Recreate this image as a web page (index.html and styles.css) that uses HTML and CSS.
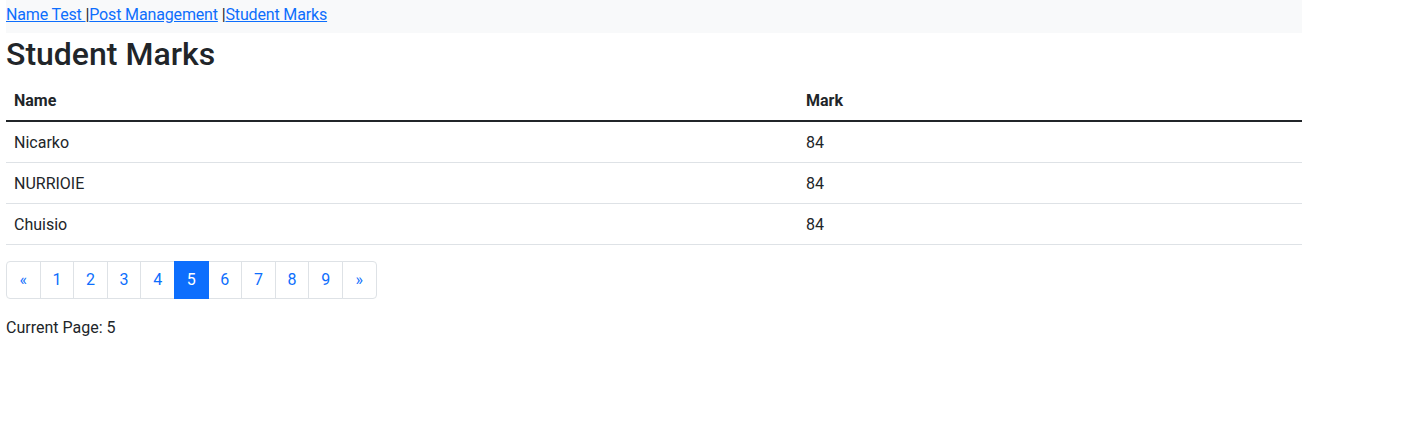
FILE: index.html
```html
<!DOCTYPE html>
<html lang="en">
<head>
<meta charset="utf-8">
<title>Student Marks</title>
<link rel="stylesheet" href="styles.css">
</head>
<body>
<div class="page">
  <nav class="topnav"><a href="#">Name Test </a>|<a href="#">Post Management</a> |<a href="#">Student Marks</a></nav>
  <h2 class="title">Student Marks</h2>
  <table class="marks">
    <thead>
      <tr><th class="col-name">Name</th><th>Mark</th></tr>
    </thead>
    <tbody>
      <tr><td>Nicarko</td><td>84</td></tr>
      <tr><td>NURRIOIE</td><td>84</td></tr>
      <tr><td>Chuisio</td><td>84</td></tr>
    </tbody>
  </table>
  <ul class="pagination">
    <li><a class="page-link" href="#">&laquo;</a></li>
    <li><a class="page-link" href="#">1</a></li>
    <li><a class="page-link" href="#">2</a></li>
    <li><a class="page-link" href="#">3</a></li>
    <li><a class="page-link" href="#">4</a></li>
    <li><a class="page-link active" href="#">5</a></li>
    <li><a class="page-link" href="#">6</a></li>
    <li><a class="page-link" href="#">7</a></li>
    <li><a class="page-link" href="#">8</a></li>
    <li><a class="page-link" href="#">9</a></li>
    <li><a class="page-link" href="#">&raquo;</a></li>
  </ul>
  <p class="current">Current Page: 5</p>
</div>
</body>
</html>
```
FILE: styles.css
```css
* { box-sizing: border-box; }
html, body { margin: 0; padding: 0; }
body {
  font-family: Roboto, "Liberation Sans", sans-serif;
  font-size: 16px;
  line-height: 1.5;
  color: #212529;
  background: #fff;
}
.page {
  width: 1296px;
  margin-left: 6px;
}
.topnav {
  background: #f8f9fa;
  height: 33px;
  padding-top: 3px;
  color: #212529;
  letter-spacing: -0.15px;
}
.topnav a { color: #0d6efd; text-decoration: underline; }
.title {
  margin: 0 0 7px;
  padding-top: 2px;
  font-size: 32px;
  font-weight: 500;
  line-height: 1.2;
}
.marks {
  width: 100%;
  border-collapse: collapse;
  margin-bottom: 16px;
}
.marks th, .marks td {
  text-align: left;
  padding: 9px 8px 7px;
  border-bottom: 1px solid #dee2e6;
  vertical-align: top;
}
.marks th { font-weight: 700; border-bottom: 2px solid #212529; }
.marks .col-name { width: 792px; }
.pagination {
  display: flex;
  list-style: none;
  margin: 0 0 17px;
  padding: 0;
}
.page-link {
  display: block;
  padding: 6px 0;
  width: 34.6px;
  text-align: center;
  color: #0d6efd;
  text-decoration: none;
  border: 1px solid #dee2e6;
  margin-left: -1px;
  background: #fff;
}
.pagination li:first-child .page-link { margin-left: 0; border-radius: 4px 0 0 4px; }
.pagination li:last-child .page-link { border-radius: 0 4px 4px 0; }
.page-link.active {
  background: #0d6efd;
  border-color: #0d6efd;
  color: #fff;
  position: relative;
}
.current { margin: 0; }
```
